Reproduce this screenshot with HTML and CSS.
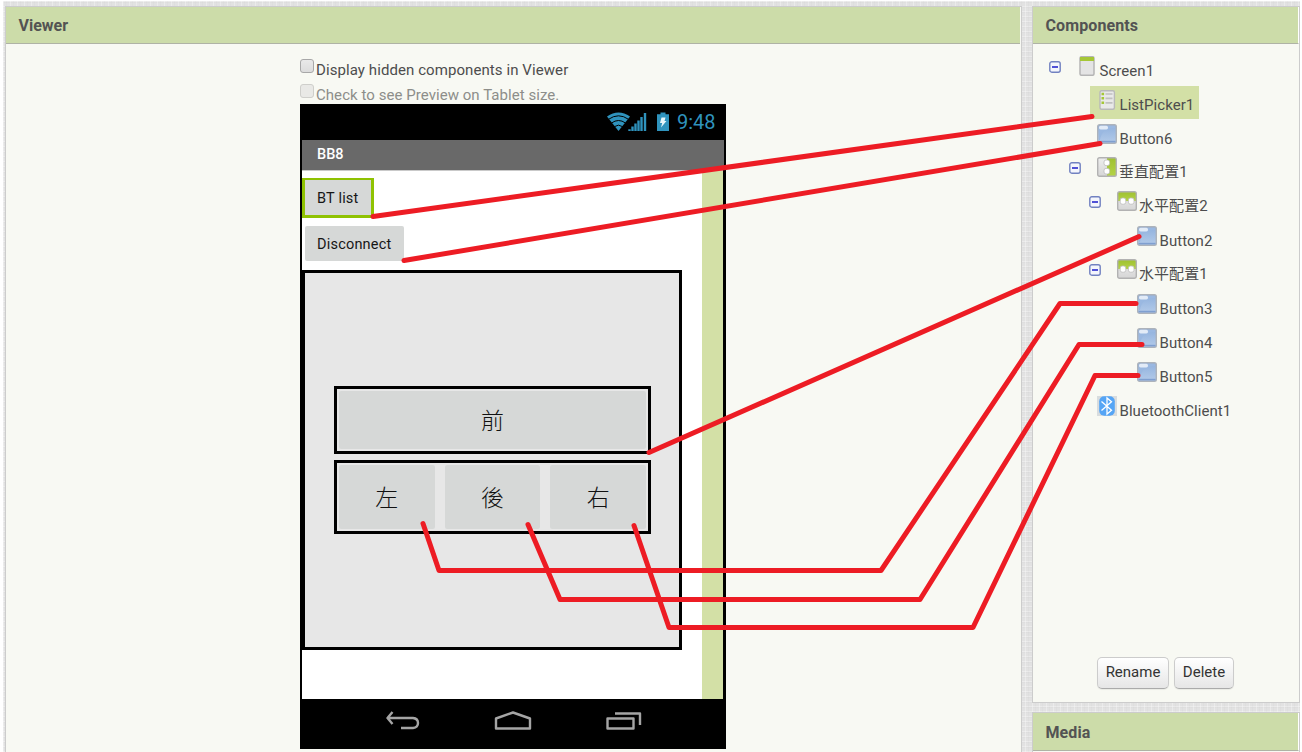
FILE: index.html
```html
<!DOCTYPE html>
<html lang="en">
<head>
<meta charset="utf-8">
<title>Designer</title>
<link rel="stylesheet" href="styles.css">
</head>
<body>
<svg class="defs" width="0" height="0" aria-hidden="true">
  <defs>
    <linearGradient id="blue" x1="0" y1="0" x2="0" y2="1"><stop offset="0" stop-color="#8fb0dd"/><stop offset="1" stop-color="#b4cbe9"/></linearGradient>
    <linearGradient id="gray" x1="0" y1="0" x2="0" y2="1"><stop offset="0" stop-color="#eee"/><stop offset="1" stop-color="#d6d6d6"/></linearGradient>
    <linearGradient id="green" x1="0" y1="0" x2="0" y2="1"><stop offset="0" stop-color="#9fc131"/><stop offset="1" stop-color="#b4d346"/></linearGradient>
    <symbol id="i-button" viewBox="0 0 20 20">
      <rect x=".7" y=".7" width="18.6" height="18.6" rx="1.8" fill="url(#blue)" stroke="#adb3bb" stroke-width="1.4"/>
      <path d="M2 2H18V4C8 4 4 9 3 16H2Z" fill="#9ab8e1"/>
      <rect x="2" y="1.8" width="9" height="3.6" rx="1.6" fill="#e2ebf7"/>
      <path d="M1.5 17.6H18.5" stroke="#7f9fd0" stroke-width="1.6"/>
    </symbol>
    <symbol id="i-screen" viewBox="0 0 20 20">
      <rect x="3" y=".7" width="14" height="18.6" rx="1.5" fill="#e4e4e4" stroke="#b5b5b5" stroke-width="1.5"/>
      <path d="M3 1H17V5H3Z" fill="#a5c736"/>
    </symbol>
    <symbol id="i-list" viewBox="0 0 20 20">
      <rect x="3" y=".7" width="14.4" height="18.6" rx="1.5" fill="#e9e9e9" stroke="#b9b9b9" stroke-width="1.4"/>
      <path d="M4.5 4h2.6M4.5 8.3h2.6M4.5 12.8h2.6" stroke="#a5c736" stroke-width="2.4"/>
      <path d="M8.5 4h7M8.5 8.3h7M8.5 12.8h7" stroke="#c0c0c0" stroke-width="1.7"/>
    </symbol>
    <symbol id="i-horizontal" viewBox="0 0 20 20">
      <path d="M1 1H19V19H1Z" fill="url(#gray)"/>
      <path d="M1 1H19V10H1Z" fill="url(#green)"/>
      <rect x=".7" y=".7" width="18.6" height="18.6" rx="1.8" fill="none" stroke="#b2b2b2" stroke-width="1.4"/>
      <rect x="3.2" y="7" width="5.6" height="6.2" rx="2" fill="#fff" stroke="#bbb" stroke-width=".8"/>
      <rect x="11.4" y="7" width="5.6" height="6.2" rx="2" fill="#fff" stroke="#bbb" stroke-width=".8"/>
    </symbol>
    <symbol id="i-vertical" viewBox="0 0 20 20">
      <path d="M1 1H19V19H1Z" fill="url(#gray)"/>
      <path d="M10 1H19V19H10Z" fill="url(#green)"/>
      <rect x=".7" y=".7" width="18.6" height="18.6" rx="1.8" fill="none" stroke="#b2b2b2" stroke-width="1.4"/>
      <rect x="7" y="3" width="5.6" height="5.6" rx="2" fill="#fff" stroke="#bbb" stroke-width=".8"/>
      <rect x="7" y="11.4" width="5.6" height="5.6" rx="2" fill="#fff" stroke="#bbb" stroke-width=".8"/>
    </symbol>
    <symbol id="i-bluetooth" viewBox="0 0 20 20">
      <rect width="20" height="20" fill="#d8dcde"/>
      <rect x="2.2" y=".2" width="15.6" height="19.6" rx="5" fill="#55a5f5"/>
      <path d="M4.500 5.500 14.500 14.200 10 18V2L14.500 5.800 4.500 14.500" fill="none" stroke="#fff" stroke-width="1.3"/>
    </symbol>
    <symbol id="i-minus" viewBox="0 0 12 12">
      <rect x=".8" y=".8" width="10.4" height="10.4" rx="2" fill="#f4f6fc" stroke="#7181c0" stroke-width="1.4"/>
      <path d="M3 6H9" stroke="#1a1ac8" stroke-width="1.5"/>
    </symbol>
  </defs>
</svg>
<div class="workspace">
  <section class="panel viewer">
    <h2 class="panel-title">Viewer</h2>
    <div class="viewer-body">
      <label class="option"><span class="check"></span>Display hidden components in Viewer</label>
      <label class="option disabled"><span class="check"></span>Check to see Preview on Tablet size.</label>
      <div class="phone">
        <div class="status-bar">
          <svg class="status-icons" width="64" height="20" viewBox="0 0 64 20" fill="none" stroke="#2f93bd">
            <path d="M1 4.6Q12.500-3.800 24 4.600L12.500 19Z" fill="#2f93bd" stroke="none"/>
            <path d="M2.500 7.300Q12.500.3 22.500 7.300M5.500 11Q12.500 6 19.500 11M8.500 14.600Q12.500 11.700 16.500 14.600" stroke="#000" stroke-width="1"/>
            <path d="M23.500 19V17.200M26.500 19V14.500M29.500 19V11.500M32.500 19V8.500M35.500 19V5M39 19V1" stroke-width="2.4"/>
            <path d="M51 2.300H54.500V.5H59.500V2.300H63V19H51Z" fill="#2f93bd" stroke="none"/>
            <path d="M55.500 5.500H59.500L58.500 9H60.500L55 15.500 56.200 11H54Z" fill="#e8f6fa" stroke="none"/>
          </svg>
          <span class="clock">9:48</span>
        </div>
        <div class="title-bar">BB8</div>
        <div class="screen">
          <div class="canvas">
            <div class="selected"><div class="app-button">BT list</div></div>
            <div class="app-button disconnect">Disconnect</div>
            <div class="vertical">
              <div class="horizontal front"><div class="pad">前</div></div>
              <div class="horizontal turn"><div class="pad">左</div><div class="pad">後</div><div class="pad">右</div></div>
            </div>
          </div>
          <div class="scroll-strip"></div>
        </div>
        <div class="nav-bar">
          <svg width="34" height="22" viewBox="0 0 34 22"><path d="M6.500 2 1.500 8 6.500 14M2 8H27Q32 8.500 32 13T27 18H15"/></svg>
          <svg width="38" height="22" viewBox="0 0 38 22"><path d="M2 8.500 19 2.500 36 8.500V18.500H2Z"/></svg>
          <svg width="36" height="22" viewBox="0 0 36 22"><path d="M1.500 8.500H27.500V18.500H1.500ZM9 3.500H34V15"/></svg>
        </div>
      </div>
    </div>
  </section>
  <div class="side">
    <section class="panel components">
      <h2 class="panel-title">Components</h2>
      <div class="tree">
        <div class="row"><svg class="toggle"><use href="#i-minus"/></svg><svg class="icon"><use href="#i-screen"/></svg><span>Screen1</span></div>
        <div class="row leaf d1 active"><svg class="icon"><use href="#i-list"/></svg><span>ListPicker1</span></div>
        <div class="row leaf d1"><svg class="icon"><use href="#i-button"/></svg><span>Button6</span></div>
        <div class="row d1 cjk"><svg class="toggle"><use href="#i-minus"/></svg><svg class="icon"><use href="#i-vertical"/></svg><span>垂直配置1</span></div>
        <div class="row d2 cjk"><svg class="toggle"><use href="#i-minus"/></svg><svg class="icon"><use href="#i-horizontal"/></svg><span>水平配置2</span></div>
        <div class="row leaf d3"><svg class="icon"><use href="#i-button"/></svg><span>Button2</span></div>
        <div class="row d2 cjk"><svg class="toggle"><use href="#i-minus"/></svg><svg class="icon"><use href="#i-horizontal"/></svg><span>水平配置1</span></div>
        <div class="row leaf d3"><svg class="icon"><use href="#i-button"/></svg><span>Button3</span></div>
        <div class="row leaf d3"><svg class="icon"><use href="#i-button"/></svg><span>Button4</span></div>
        <div class="row leaf d3"><svg class="icon"><use href="#i-button"/></svg><span>Button5</span></div>
        <div class="row leaf d1"><svg class="icon"><use href="#i-bluetooth"/></svg><span>BluetoothClient1</span></div>
      </div>
      <div class="actions"><button class="btn rename">Rename</button><button class="btn delete">Delete</button></div>
    </section>
    <section class="panel media"><h2 class="panel-title">Media</h2></section>
  </div>
</div>
<svg class="links" width="1302" height="752" viewBox="0 0 1302 752">
  <path d="M373 216.500 1092 116.500"/>
  <path d="M404 260.500 1100 143.500"/>
  <path d="M649 452.500 1139 236.500"/>
  <path d="M423 523.500 439 570.500H881L1060 303.500H1136"/>
  <path d="M528 524.500 560 599.500H920L1079 344.500H1142"/>
  <path d="M634 525.500 669 627.500H973L1095 375.500H1138"/>
</svg>
</body>
</html>
```
FILE: styles.css
```css
* { box-sizing: border-box; }

body {
  margin: 0;
  width: 1302px;
  height: 752px;
  overflow: hidden;
  position: relative;
  background: #fff;
  color: #4d4d4d;
  font: 15px/18px Roboto, "Noto Sans CJK TC", sans-serif;
}

.defs { position: absolute; }

.workspace {
  display: flex;
  gap: 10px;
  height: 751px;
  width: 1297px;
  margin: 1px 0 0 3px;
  padding: 5px 0 0 2px;
  background:
    repeating-linear-gradient(90deg, rgba(255,255,255,.3) 0 1px, transparent 1px 3px, rgba(0,0,0,.015) 3px 4px, transparent 4px 7px),
    repeating-linear-gradient(0deg, rgba(255,255,255,.3) 0 1px, transparent 1px 4px, rgba(0,0,0,.015) 4px 5px),
    #e2e2e2;
}

.panel { background: #f8f9f3; border: 1px solid #ccc; }

.panel-title {
  margin: 0;
  height: 37px;
  padding: 0 12px;
  background: #ccdca9;
  border-bottom: 1px solid #afb3a5;
  font-size: 16px;
  line-height: 37px;
  font-weight: 700;
  color: #535353;
  letter-spacing: .1px;
}

.viewer { width: 1017px; height: 760px; }
.viewer .panel-title { margin-right: 1px; padding-left: 12.500px; letter-spacing: 0; }
.viewer-body { width: 427px; margin-left: 294px; padding-top: 13px; }

.option {
  display: flex;
  height: 25px;
  line-height: 26px;
  white-space: nowrap;
  letter-spacing: .08px;
}
.option.disabled { color: #8d8e8a; height: 22px; letter-spacing: .05px; }
.check {
  width: 14px;
  height: 14px;
  margin: 2px 2px 0 0;
  border: 1px solid #a8a8a8;
  border-radius: 3px;
  background: linear-gradient(#e9e9e9, #dcdcdc);
}
.disabled .check { border-color: #cfcfcb; background: #e9e9e6; }

.phone {
  width: 426px;
  height: 645px;
  background: #000;
  padding-left: 2px;
}
.status-bar {
  display: flex;
  justify-content: flex-end;
  height: 36px;
  padding: 8px 11px 0 0;
}
.clock {
  margin-left: 7px;
  width: 38px;
  color: #2f93bd;
  font-size: 20px;
  line-height: 21px;
}
.title-bar {
  width: 422px;
  height: 30px;
  padding-left: 15px;
  background: #696969;
  color: #fff;
  font-size: 14.500px;
  font-weight: 500;
  line-height: 29px;
}
.screen {
  display: flex;
  width: 421px;
  height: 529px;
  background: #fff;
  border-top: 1px solid #c9c9c9;
}
.canvas { width: 400px; padding-top: 7px; }
.scroll-strip { width: 21px; background: #d3e0a6; }

.selected {
  width: 72px;
  height: 40px;
  border: 3px solid #8fc202;
  border-top-width: 2px;
  background: #d6d8d7;
}
.app-button {
  height: 35px;
  padding-left: 12px;
  border-radius: 2px;
  background: #d6d8d7;
  color: #161616;
  font-size: 14.500px;
  line-height: 37px;
  letter-spacing: .2px;
}
.disconnect { width: 99px; margin: 8px 0 9px 3px; }

.vertical {
  display: flex;
  flex-direction: column;
  justify-content: center;
  align-items: center;
  gap: 6px;
  width: 380px;
  height: 380px;
  padding-left: 1px;
  border: 3px solid #000;
  background: #e7e7e7;
}
.horizontal {
  display: flex;
  gap: 10px;
  width: 317px;
  border: 3px solid #000;
  padding: 2px;
}
.front { height: 68px; }
.turn { height: 74px; }
.pad {
  flex: 1;
  display: flex;
  align-items: center;
  justify-content: center;
  padding-bottom: 2px;
  border-radius: 2px;
  background: #d6d8d7;
  color: #111;
  font-family: "Noto Sans CJK TC", sans-serif;
  font-size: 23px;
  font-weight: 300;
}

.nav-bar {
  display: flex;
  gap: 74px;
  padding: 11px 0 0 84px;
}
.nav-bar svg { fill: none; stroke: #a5a5a5; stroke-width: 2.400; stroke-linejoin: round; }

.side { width: 268px; }
.components { height: 697px; }
.media { height: 60px; margin-top: 9px; }
.side .panel-title {
  border-right: 1px solid #fff;
  padding-left: 12.500px;
}
.media .panel-title { height: 38px; line-height: 39px; }

.tree { height: 605px; padding: 8px 0 0 15px; }
.row {
  display: flex;
  height: 33px;
  margin-bottom: 1px;
  width: max-content;
}
.row span { padding-top: 10px; margin-left: 2.500px; letter-spacing: .05px; }
.row.cjk { position: relative; top: -1px; }
.row.cjk span { margin-left: 2px; }
.toggle { width: 12px; height: 12px; margin: 9px 16px 0 1px; }
.icon { width: 20px; height: 20px; margin-top: 4px; flex: none; }
.row.d1 { margin-left: 20px; }
.row.d2 { margin-left: 40px; }
.row.leaf.d1 { margin-left: 42px; padding: 0 5px 0 7px; }
.leaf.d3 { margin-left: 89px; }
.active { background: #d3e0a6; }

.actions { display: flex; gap: 5px; padding: 8px 0 0 64px; }
.btn {
  height: 32px;
  padding: 0 0 2px;
  border: 1px solid #ccc;
  border-bottom-color: #aaa;
  border-radius: 5px;
  background: linear-gradient(#fff, #e6e6e6);
  box-shadow: 0 1px 1px rgba(0,0,0,.06);
  color: #333;
  font: 15px/18px Roboto, sans-serif;
}
.rename { width: 72px; }
.delete { width: 60px; }

.links { position: absolute; left: 0; top: 0; pointer-events: none; }
.links path {
  fill: none;
  stroke: #ed1c24;
  stroke-width: 5;
  stroke-linecap: round;
  stroke-linejoin: round;
}
```
